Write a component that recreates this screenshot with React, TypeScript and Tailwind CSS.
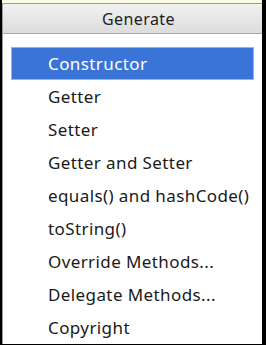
const items = [
  "Constructor",
  "Getter",
  "Setter",
  "Getter and Setter",
  "equals() and hashCode()",
  "toString()",
  "Override Methods...",
  "Delegate Methods...",
  "Copyright",
];

export default function App() {
  return (
    <div
      className="w-[266px] h-[345px] bg-black pl-[2px] pr-[4px] pb-[3px] flex flex-col"
      style={{ fontFamily: '"Noto Sans", "Open Sans", sans-serif' }}
    >
      <div className="h-[3px] bg-[#fcfbe6] shrink-0" />
      <div className="flex-1 flex flex-col border-l border-t border-[#9a9a9a] bg-white">
        <div className="h-[30px] shrink-0 flex items-center justify-center bg-gradient-to-b from-[#f2f2f2] to-[#dcdcdc] border-b border-[#a8a8a8] text-[16px] tracking-[0.4px] text-[#1e1e1e] pl-[12px]">
          Generate
        </div>
        <div className="pt-[13px] px-[8px] flex flex-col">
          {items.map((label, i) => (
            <div
              key={label}
              className={
                i === 0
                  ? "h-[33px] flex items-center pl-[36px] bg-[#3a74d6] border border-[#8fb3ec] text-white text-[17px] tracking-[0.4px]"
                  : "h-[33px] flex items-center pl-[37px] text-[#1a1a1a] text-[17px] tracking-[0.4px]"
              }
            >
              {label}
            </div>
          ))}
        </div>
      </div>
    </div>
  );
}
